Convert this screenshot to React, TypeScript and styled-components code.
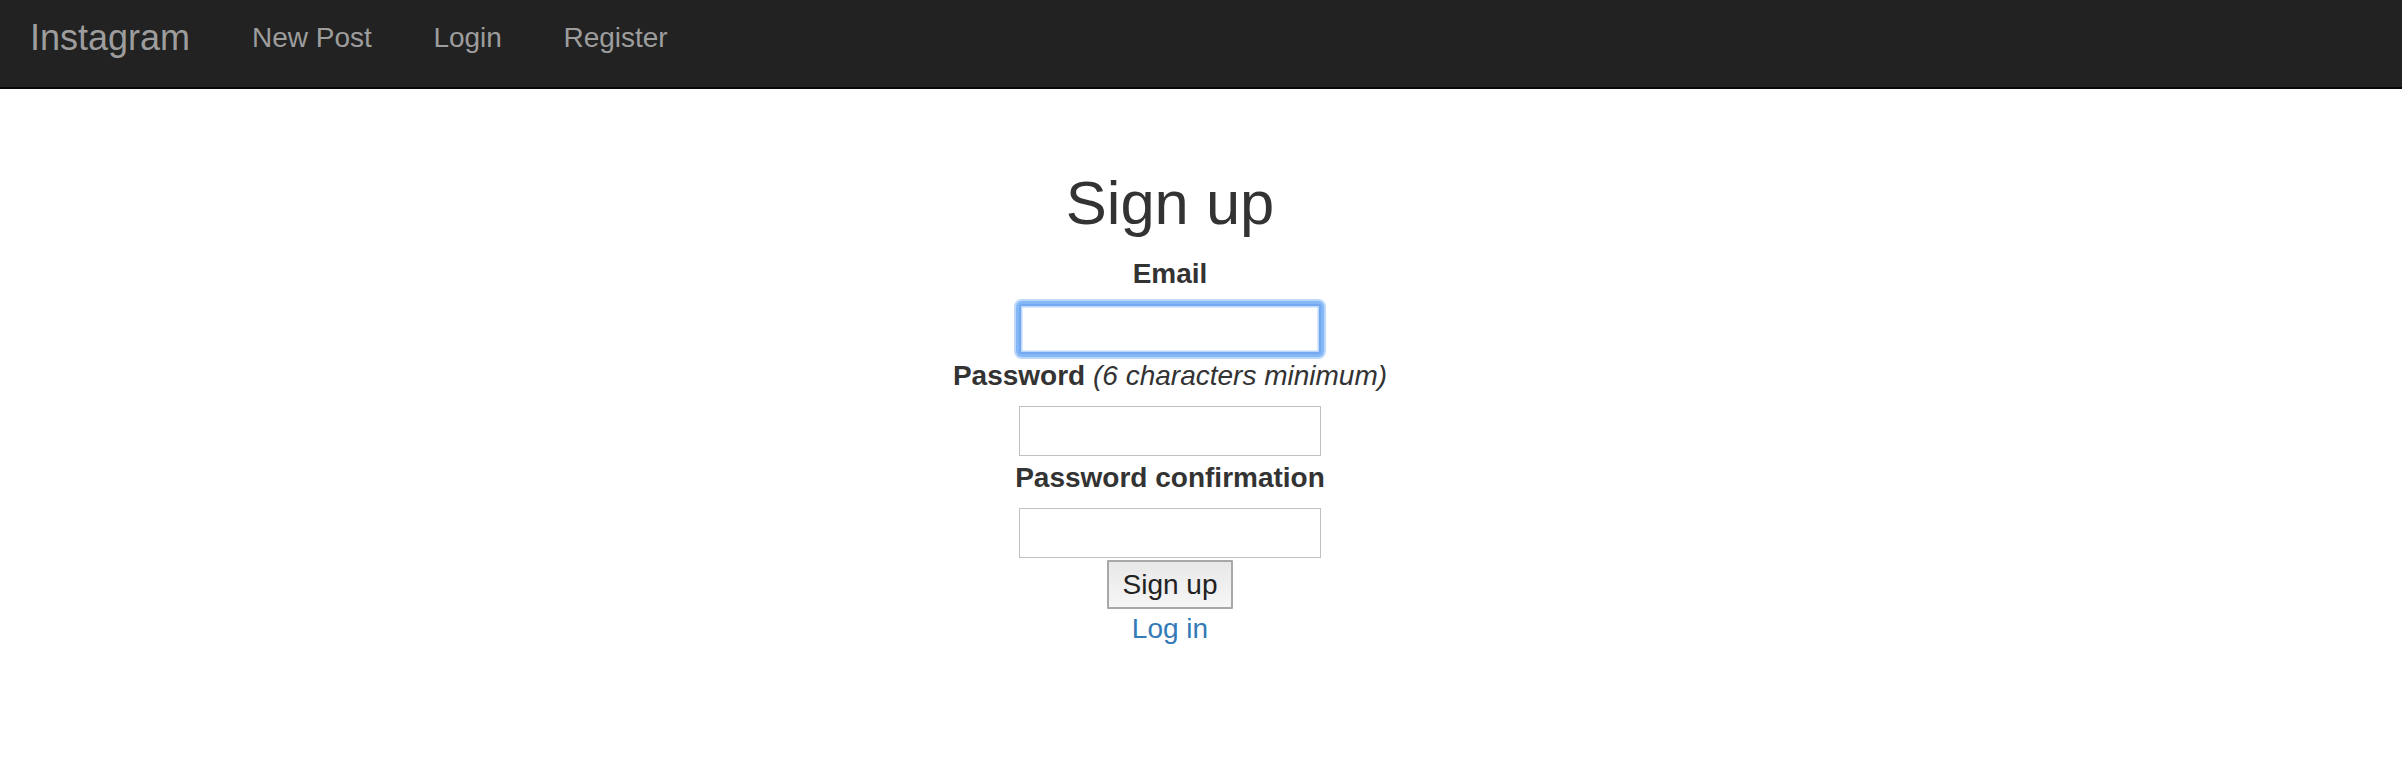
import React from "react";
import styled, { createGlobalStyle } from "styled-components";

const GlobalStyle = createGlobalStyle`
  html, body {
    margin: 0;
    padding: 0;
    background: #ffffff;
  }
  body {
    font-family: "Liberation Sans", Arial, Helvetica, sans-serif;
    color: #333333;
  }
  * { box-sizing: border-box; }
`;

const Page = styled.div`
  min-height: 780px;
  display: flex;
  flex-direction: column;
`;

const NavBar = styled.nav`
  height: 89px;
  background: #222222;
  border-bottom: 2px solid #080808;
  display: flex;
  align-items: flex-start;
  padding-left: 30px;
  gap: 62px;
`;

const Brand = styled.a`
  font-size: 36px;
  line-height: 36px;
  padding-top: 19.5px;
  color: #9d9d9d;
  text-decoration: none;
  white-space: nowrap;
`;

const NavList = styled.ul`
  list-style: none;
  margin: 0;
  padding: 0;
  display: flex;
  gap: 61.5px;
`;

const NavLink = styled.a`
  display: block;
  font-size: 28px;
  line-height: 28px;
  padding-top: 24px;
  color: #9d9d9d;
  text-decoration: none;
  white-space: nowrap;
`;

const Main = styled.main`
  display: flex;
  flex-direction: column;
  align-items: center;
  padding-right: 62px;
  padding-top: 79.5px;
`;

const Title = styled.h1`
  margin: 0 0 18px;
  font-size: 61.5px;
  line-height: 67.6px;
  font-weight: normal;
  color: #333333;
`;

const Form = styled.form`
  display: flex;
  flex-direction: column;
  align-items: center;
`;

const Label = styled.label<{ $first?: boolean }>`
  display: block;
  margin: ${(p) => (p.$first ? "0" : "2px")} 0 10px;
  font-size: 28px;
  line-height: 40px;
  font-weight: bold;
  color: #333333;
  white-space: nowrap;
`;

const Hint = styled.em`
  font-weight: normal;
  font-style: italic;
`;

const TextInput = styled.input<{ $focused?: boolean }>`
  display: block;
  width: 302px;
  height: 50px;
  margin: 0;
  padding: 2px 4px;
  font-family: "Liberation Sans", Arial, sans-serif;
  font-size: 24px;
  background: #ffffff;
  border: 1px solid #bfbfbf;
  border-radius: 0;
  outline: none;
  ${(p) =>
    p.$focused &&
    `
    border: 2px solid #74a9f1;
    border-radius: 3px;
    box-shadow: inset 0 0 0 1.5px #bcd9fb, 0 0 0 3px #84b7f6, 0 0 0 5px #bcd8fb;
  `}
`;

const SubmitButton = styled.button`
  margin-top: 2px;
  width: 126px;
  height: 49px;
  padding: 0;
  font-family: "Liberation Sans", Arial, sans-serif;
  font-size: 28px;
  line-height: 45px;
  color: #222222;
  border: 2px solid #a8a8a8;
  border-radius: 1px;
  background: linear-gradient(#e8e8e8, #f6f6f6);
`;

const LoginLink = styled.a`
  display: block;
  font-size: 28px;
  line-height: 40px;
  color: #337ab7;
  text-decoration: none;
`;

export default function App() {
  return (
    <>
      <GlobalStyle />
      <Page>
        <NavBar>
          <Brand href="#">Instagram</Brand>
          <NavList>
            <li><NavLink href="#">New Post</NavLink></li>
            <li><NavLink href="#">Login</NavLink></li>
            <li><NavLink href="#">Register</NavLink></li>
          </NavList>
        </NavBar>
        <Main>
          <Title>Sign up</Title>
          <Form onSubmit={(e) => e.preventDefault()}>
            <Label $first htmlFor="user_email">Email</Label>
            <TextInput id="user_email" type="email" $focused />
            <Label htmlFor="user_password">
              Password <Hint>(6 characters minimum)</Hint>
            </Label>
            <TextInput id="user_password" type="password" />
            <Label htmlFor="user_password_confirmation">Password confirmation</Label>
            <TextInput id="user_password_confirmation" type="password" />
            <SubmitButton type="submit">Sign up</SubmitButton>
            <LoginLink href="#">Log in</LoginLink>
          </Form>
        </Main>
      </Page>
    </>
  );
}
